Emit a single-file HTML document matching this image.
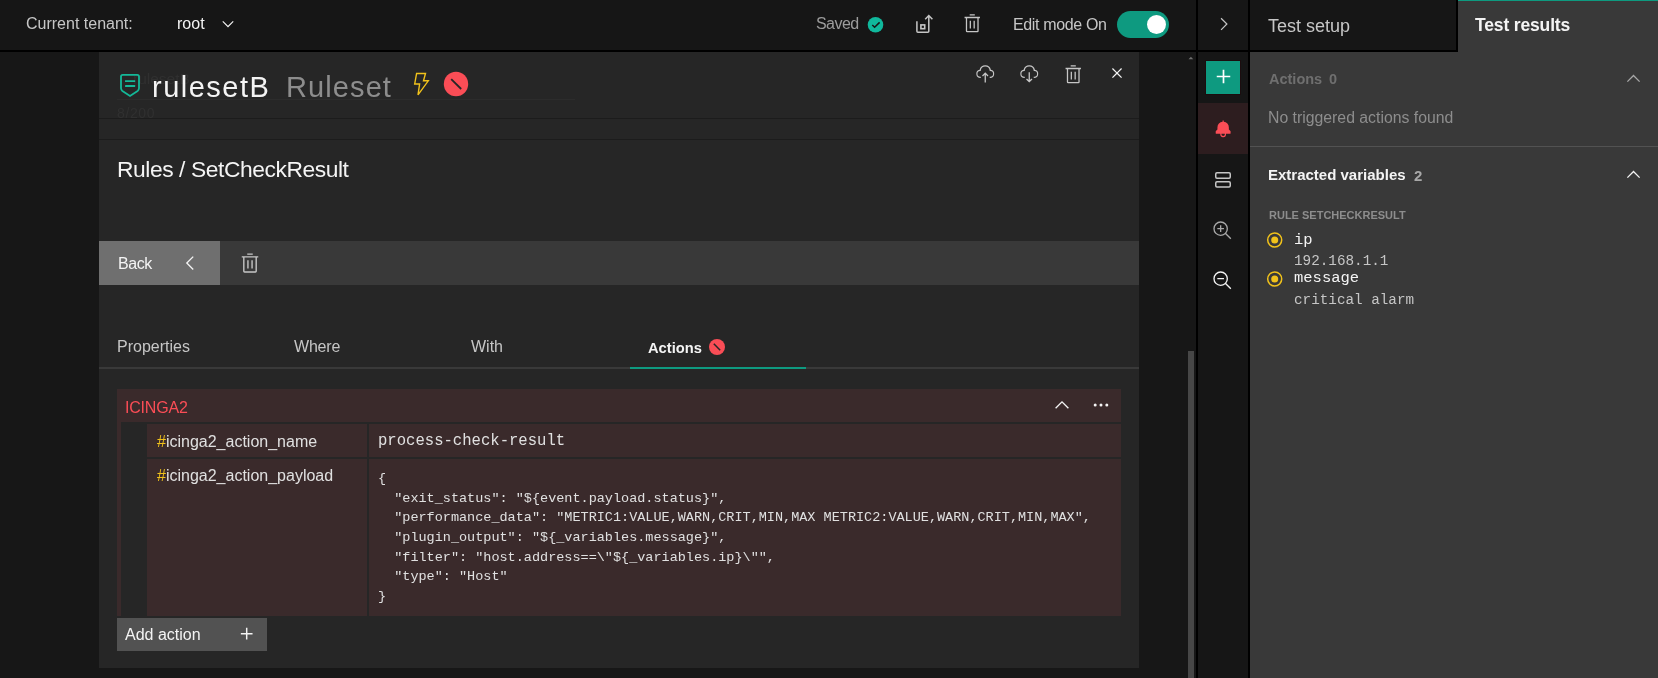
<!DOCTYPE html>
<html><head><meta charset="utf-8"><style>
*{margin:0;padding:0;box-sizing:border-box}
html,body{width:1658px;height:678px;overflow:hidden;background:#161616}
body>div,body>svg{position:absolute}
.t{white-space:pre;will-change:transform}
</style></head><body>
<div style="left:0px;top:0px;width:1658px;height:50px;background:#161616;"></div>
<div style="left:0px;top:50px;width:1456px;height:2px;background:#000;"></div>
<div class="t" style="left:26.00px;top:16.46px;font:400 16px/16px 'Liberation Sans', sans-serif;color:#c6c6c6;letter-spacing:0px;">Current tenant:</div>
<div class="t" style="left:177.30px;top:16.46px;font:400 16px/16px 'Liberation Sans', sans-serif;color:#f4f4f4;letter-spacing:0px;">root</div>
<svg style="left:218.6px;top:14.8px;" width="18" height="18" viewBox="0 0 32 32"><path fill="#f4f4f4" d="M16 22L6 12 7.4 10.6 16 19.2 24.6 10.6 26 12z"/></svg>
<div class="t" style="left:816.30px;top:15.86px;font:400 16px/16px 'Liberation Sans', sans-serif;color:#9c9c9c;letter-spacing:-0.55px;">Saved</div>
<svg style="left:866px;top:17px;" width="20" height="16" viewBox="866 17 20 16"><circle cx="875.5" cy="24.8" r="7.8" fill="#10b89c"/><path d="M872.3 25 L874.6 27.3 L879.6 22.4" fill="none" stroke="#161616" stroke-width="1.5"/></svg>
<svg style="left:912px;top:12px;" width="24" height="24" viewBox="912 12 24 24"><path d="M916.9 21.2 V31.2 Q916.9 32.2 917.9 32.2 H927.8 Q928.8 32.2 928.8 31.2 V15.6 M925.2 19.3 L928.8 15.6 L932.4 19.3" fill="none" stroke="#c6c6c6" stroke-width="1.5"/><rect x="920.9" y="24.9" width="3.8" height="3.8" fill="none" stroke="#c6c6c6" stroke-width="1.6"/></svg>
<svg style="left:961.6px;top:13.4px;" width="20.5" height="20.5" viewBox="0 0 32 32"><path fill="#c6c6c6" d="M12 12H14V24H12zM18 12H20V24H18zM4 6V8H6V28a2 2 0 002 2H24a2 2 0 002-2V8h2V6zM8 28V8H24V28zM12 2H20V4H12z"/></svg>
<div class="t" style="left:1012.50px;top:16.76px;font:400 16px/16px 'Liberation Sans', sans-serif;color:#c6c6c6;letter-spacing:-0.35px;">Edit mode On</div>
<div style="left:1117px;top:11px;width:52px;height:27px;background:#0e9a80;border-radius:14px"></div>
<div style="left:1146.5px;top:14.5px;width:19.8px;height:19.8px;background:#fff;border-radius:50%"></div>
<div style="left:1196px;top:0px;width:2px;height:678px;background:#000;"></div>
<div style="left:1248px;top:0px;width:2px;height:678px;background:#000;"></div>
<svg style="left:1213.5px;top:14.15px;" width="20" height="20" viewBox="0 0 32 32"><path fill="#c6c6c6" d="M22 16L12 26 10.6 24.6 19.2 16 10.6 7.4 12 6z"/></svg>
<div style="left:1250px;top:0px;width:1206px;height:50px;background:#161616;"></div>
<div style="left:1250px;top:50px;width:208px;height:2px;background:#000;"></div>
<div style="left:1456px;top:0px;width:2px;height:52px;background:#000;"></div>
<div class="t" style="left:1268.20px;top:16.66px;font:400 18px/18px 'Liberation Sans', sans-serif;color:#c6c6c6;letter-spacing:0px;">Test setup</div>
<div style="left:1458px;top:0px;width:200px;height:52px;background:#393939;"></div>
<div style="left:1458px;top:0px;width:200px;height:1px;background:#0e9a80;"></div>
<div class="t" style="left:1475.30px;top:17.39px;font:700 17.5px/17.5px 'Liberation Sans', sans-serif;color:#f4f4f4;letter-spacing:-0.15px;">Test results</div>
<div style="left:0px;top:52px;width:1196px;height:626px;background:#171717;"></div>
<div style="left:99px;top:52px;width:1040px;height:616px;background:#262626;"></div>
<div style="left:1188px;top:351px;width:6px;height:327px;background:#474747;"></div>
<svg style="left:1186px;top:54px;" width="10" height="8" viewBox="1186 54 10 8"><path d="M1188.5 59.3 L1190.9 56.8 L1193.3 59.3 Z" fill="#6f6f6f"/></svg>
<div class="t" style="left:133.00px;top:70.88px;font:400 15.5px/15.5px 'Liberation Sans', sans-serif;color:#303030;letter-spacing:0px;">rulesetB</div>
<div style="left:117px;top:99px;width:458px;height:1px;background:#2c2c2c;"></div>
<div class="t" style="left:116.50px;top:106.45px;font:400 14px/14px 'Liberation Sans', sans-serif;color:#303030;letter-spacing:0.6px;">8/200</div>
<svg style="left:116px;top:70px;" width="28" height="30" viewBox="116 70 28 30"><path d="M121 76.6 Q121 74.9 122.7 74.9 H137.3 Q139 74.9 139 76.6 V88.3 Q139 89.9 137.6 90.9 L130 95.9 L122.4 90.9 Q121 89.9 121 88.3 Z" fill="none" stroke="#14b898" stroke-width="1.8"/><rect x="125" y="80.2" width="10.2" height="1.9" rx="0.4" fill="#14b898"/><rect x="125" y="85.1" width="10.2" height="1.9" rx="0.4" fill="#14b898"/></svg>
<div class="t" style="left:152.40px;top:73.25px;font:400 29px/29px 'Liberation Sans', sans-serif;color:#f4f4f4;letter-spacing:1.5px;">rulesetB</div>
<div class="t" style="left:286.00px;top:73.25px;font:400 29px/29px 'Liberation Sans', sans-serif;color:#8d8d8d;letter-spacing:1.1px;">Ruleset</div>
<svg style="left:410px;top:70px;" width="24" height="30" viewBox="410 70 24 30"><path d="M416.6 73.5 H425.5 L423.5 80.8 H428.3 L418 94.8 L419.6 84 H414.7 Z" fill="none" stroke="#f1c21b" stroke-width="1.4" stroke-linejoin="miter"/></svg>
<svg style="left:440px;top:70px;" width="32" height="30" viewBox="440 70 32 30"><circle cx="456" cy="84" r="12.2" fill="#fa4d56"/><path d="M451.2 79.1 L461.2 89" stroke="#262626" stroke-width="1.8"/></svg>
<svg style="left:974.7px;top:63.7px;" width="20.5" height="20.5" viewBox="0 0 32 32"><path fill="#c6c6c6" d="M23.5,22H23V20h.5a4.5,4.5,0,0,0,.36-9L23,11l-.1-.82a7,7,0,0,0-13.88,0L9,11,8.14,11a4.5,4.5,0,0,0,.36,9H9v2H8.5A6.5,6.5,0,0,1,7.2,9.14a9,9,0,0,1,17.6,0A6.5,6.5,0,0,1,23.5,22ZM11 18L12.41 19.41 15 16.83 15 29 17 29 17 16.83 19.59 19.41 21 18 16 13 11 18z"/></svg>
<svg style="left:1018.7px;top:63.7px;" width="20.5" height="20.5" viewBox="0 0 32 32"><path fill="#c6c6c6" d="M23.5,22H23V20h.5a4.5,4.5,0,0,0,.36-9L23,11l-.1-.82a7,7,0,0,0-13.88,0L9,11,8.14,11a4.5,4.5,0,0,0,.36,9H9v2H8.5A6.5,6.5,0,0,1,7.2,9.14a9,9,0,0,1,17.6,0A6.5,6.5,0,0,1,23.5,22ZM21 24L19.59 22.59 17 25.17 17 13 15 13 15 25.17 12.41 22.59 11 24 16 29 21 24z"/></svg>
<svg style="left:1062.5px;top:63.8px;" width="20.5" height="20.5" viewBox="0 0 32 32"><path fill="#c6c6c6" d="M12 12H14V24H12zM18 12H20V24H18zM4 6V8H6V28a2 2 0 002 2H24a2 2 0 002-2V8h2V6zM8 28V8H24V28zM12 2H20V4H12z"/></svg>
<svg style="left:1106.8px;top:63px;" width="20" height="20" viewBox="0 0 32 32"><path fill="#f4f4f4" d="M24 9.4L22.6 8 16 14.6 9.4 8 8 9.4 14.6 16 8 22.6 9.4 24 16 17.4 22.6 24 24 22.6 17.4 16 24 9.4z"/></svg>
<div style="left:99px;top:118px;width:1040px;height:1px;background:#1c1c1c;"></div>
<div style="left:99px;top:139px;width:1040px;height:1px;background:#1c1c1c;"></div>
<div class="t" style="left:116.90px;top:158.30px;font:400 22.8px/22.8px 'Liberation Sans', sans-serif;color:#f4f4f4;letter-spacing:-0.42px;">Rules / SetCheckResult</div>
<div style="left:99px;top:241px;width:1040px;height:44px;background:#393939;"></div>
<div style="left:99px;top:241px;width:121px;height:44px;background:#6f6f6f;"></div>
<div class="t" style="left:117.60px;top:255.96px;font:400 16px/16px 'Liberation Sans', sans-serif;color:#f4f4f4;letter-spacing:-0.45px;">Back</div>
<svg style="left:179px;top:252.1px;" width="22" height="22" viewBox="0 0 32 32"><path fill="#f4f4f4" d="M10 16L20 6 21.4 7.4 12.8 16 21.4 24.6 20 26z"/></svg>
<svg style="left:239.15px;top:251.5px;" width="22" height="22" viewBox="0 0 32 32"><path fill="#c6c6c6" d="M12 12H14V24H12zM18 12H20V24H18zM4 6V8H6V28a2 2 0 002 2H24a2 2 0 002-2V8h2V6zM8 28V8H24V28zM12 2H20V4H12z"/></svg>
<div class="t" style="left:116.80px;top:339.16px;font:400 16px/16px 'Liberation Sans', sans-serif;color:#c6c6c6;letter-spacing:0px;">Properties</div>
<div class="t" style="left:294.00px;top:339.16px;font:400 16px/16px 'Liberation Sans', sans-serif;color:#c6c6c6;letter-spacing:-0.2px;">Where</div>
<div class="t" style="left:471.00px;top:339.16px;font:400 16px/16px 'Liberation Sans', sans-serif;color:#c6c6c6;letter-spacing:0px;">With</div>
<div class="t" style="left:648.30px;top:340.96px;font:700 14.7px/14.7px 'Liberation Sans', sans-serif;color:#f4f4f4;letter-spacing:0px;">Actions</div>
<svg style="left:706px;top:336px;" width="22" height="22" viewBox="706 336 22 22"><circle cx="717" cy="347" r="8" fill="#fa4d56"/><path d="M713.8 343.8 L720.2 350.2" stroke="#262626" stroke-width="1.5"/></svg>
<div style="left:99px;top:367px;width:1040px;height:2px;background:#393939;"></div>
<div style="left:630px;top:367px;width:176px;height:2px;background:#0e9a80;"></div>
<div style="left:117px;top:389px;width:1004px;height:227px;background:#3a2a2b;"></div>
<div class="t" style="left:125.00px;top:399.96px;font:400 16px/16px 'Liberation Sans', sans-serif;color:#fa4d56;letter-spacing:-0.2px;">ICINGA2</div>
<svg style="left:1050.7px;top:394.1px;" width="22" height="22" viewBox="0 0 32 32"><path fill="#f4f4f4" d="M16 10L26 20 24.6 21.4 16 12.8 7.4 21.4 6 20z"/></svg>
<svg style="left:1090px;top:398px;" width="22" height="14" viewBox="1090 398 22 14"><circle cx="1095.2" cy="405" r="1.5" fill="#f4f4f4"/><circle cx="1101" cy="405" r="1.5" fill="#f4f4f4"/><circle cx="1106.8" cy="405" r="1.5" fill="#f4f4f4"/></svg>
<div style="left:121px;top:422px;width:1000px;height:194px;background:#262626;"></div>
<div style="left:147px;top:424px;width:220px;height:33px;background:#3a2a2b;"></div>
<div style="left:369px;top:424px;width:752px;height:33px;background:#3a2a2b;"></div>
<div style="left:147px;top:459px;width:220px;height:157px;background:#3a2a2b;"></div>
<div style="left:369px;top:459px;width:752px;height:157px;background:#3a2a2b;"></div>
<div class="t" style="left:156.60px;top:433.66px;font:400 16px/16px 'Liberation Sans', sans-serif;color:#e0e0e0;letter-spacing:0px;"><span style="color:#f1c21b">#</span>icinga2_action_name</div>
<div class="t" style="left:156.60px;top:467.96px;font:400 16px/16px 'Liberation Sans', sans-serif;color:#e0e0e0;letter-spacing:0px;"><span style="color:#f1c21b">#</span>icinga2_action_payload</div>
<div class="t" style="left:378.30px;top:434.04px;font:400 15.6px/15.6px 'Liberation Mono', monospace;color:#e0e0e0;letter-spacing:0px;">process-check-result</div>
<div class="t" style="left:378.30px;top:472.15px;font:400 13.5px/13.5px 'Liberation Mono', monospace;color:#e0e0e0;letter-spacing:0px;">{</div>
<div class="t" style="left:378.30px;top:491.75px;font:400 13.5px/13.5px 'Liberation Mono', monospace;color:#e0e0e0;letter-spacing:0px;">  "exit_status": "${event.payload.status}",</div>
<div class="t" style="left:378.30px;top:511.35px;font:400 13.5px/13.5px 'Liberation Mono', monospace;color:#e0e0e0;letter-spacing:0px;">  "performance_data": "METRIC1:VALUE,WARN,CRIT,MIN,MAX METRIC2:VALUE,WARN,CRIT,MIN,MAX",</div>
<div class="t" style="left:378.30px;top:530.95px;font:400 13.5px/13.5px 'Liberation Mono', monospace;color:#e0e0e0;letter-spacing:0px;">  "plugin_output": "${_variables.message}",</div>
<div class="t" style="left:378.30px;top:550.55px;font:400 13.5px/13.5px 'Liberation Mono', monospace;color:#e0e0e0;letter-spacing:0px;">  "filter": "host.address==\"${_variables.ip}\"",</div>
<div class="t" style="left:378.30px;top:570.15px;font:400 13.5px/13.5px 'Liberation Mono', monospace;color:#e0e0e0;letter-spacing:0px;">  "type": "Host"</div>
<div class="t" style="left:378.30px;top:589.75px;font:400 13.5px/13.5px 'Liberation Mono', monospace;color:#e0e0e0;letter-spacing:0px;">}</div>
<div style="left:117px;top:618px;width:150px;height:33px;background:#525252;"></div>
<div class="t" style="left:124.90px;top:626.86px;font:400 16px/16px 'Liberation Sans', sans-serif;color:#f4f4f4;letter-spacing:0px;">Add action</div>
<svg style="left:235.25px;top:622.45px;" width="23.4" height="23.4" viewBox="0 0 32 32"><path fill="#f4f4f4" d="M17 15L17 8 15 8 15 15 8 15 8 17 15 17 15 24 17 24 17 17 24 17 24 15z"/></svg>
<div style="left:1198px;top:52px;width:50px;height:626px;background:#161616;"></div>
<div style="left:1206px;top:61px;width:34px;height:33px;background:#0e9a80;box-shadow:0 0 0 1px #1c0d0f"></div>
<svg style="left:1209.75px;top:63.45px;" width="27" height="27" viewBox="0 0 32 32"><path fill="#ffffff" d="M17 15L17 8 15 8 15 15 8 15 8 17 15 17 15 24 17 24 17 17 24 17 24 15z"/></svg>
<div style="left:1198px;top:103px;width:50px;height:51px;background:#2d1d1f;"></div>
<svg style="left:1213.6px;top:119.6px;" width="18.3" height="18.3" viewBox="0 0 32 32"><path fill="#fa4d56" d="M28.7071,19.293,26,16.5859V13a10.0136,10.0136,0,0,0-9-9.9492V1H15V3.0508A10.0136,10.0136,0,0,0,6,13v3.5859L3.2929,19.293A1,1,0,0,0,3,20v3a1,1,0,0,0,1,1h7v.7768a5.152,5.152,0,0,0,4.5,5.1987A5.0057,5.0057,0,0,0,21,25V24h7a1,1,0,0,0,1-1V20A1,1,0,0,0,28.7071,19.293ZM19,25a3,3,0,0,1-6,0V24h6Z"/></svg>
<svg style="left:1212px;top:170px;" width="22" height="20" viewBox="1212 170 22 20"><rect x="1215.75" y="172.75" width="14.5" height="5.4" rx="1.2" fill="none" stroke="#c6c6c6" stroke-width="1.5"/><rect x="1215.75" y="181.75" width="14.5" height="5.3" rx="1.2" fill="none" stroke="#c6c6c6" stroke-width="1.5"/></svg>
<svg style="left:1212.1px;top:220px;" width="21.3" height="21.3" viewBox="0 0 32 32"><path fill="#a8a8a8" d="M21.4479,20A10.856,10.856,0,0,0,24,13,11,11,0,1,0,13,24a10.856,10.856,0,0,0,7-2.5521L27.5859,29,29,27.5859ZM13,22a9,9,0,1,1,9-9A9.01,9.01,0,0,1,13,22ZM18 12L14 12 14 8 12 8 12 12 8 12 8 14 12 14 12 18 14 18 14 14 18 14 18 12z"/></svg>
<svg style="left:1212.1px;top:270.2px;" width="21.3" height="21.3" viewBox="0 0 32 32"><path fill="#f4f4f4" d="M21.4479,20A10.856,10.856,0,0,0,24,13,11,11,0,1,0,13,24a10.856,10.856,0,0,0,7-2.5521L27.5859,29,29,27.5859ZM13,22a9,9,0,1,1,9-9A9.01,9.01,0,0,1,13,22ZM8 12H18V14H8z"/></svg>
<div style="left:1250px;top:52px;width:408px;height:626px;background:#393939;"></div>
<div class="t" style="left:1268.50px;top:71.93px;font:700 14.5px/14.5px 'Liberation Sans', sans-serif;color:#6f6f6f;letter-spacing:0px;">Actions</div>
<div class="t" style="left:1328.70px;top:71.93px;font:700 14.5px/14.5px 'Liberation Sans', sans-serif;color:#6f6f6f;letter-spacing:0px;">0</div>
<svg style="left:1623.3px;top:67.6px;" width="21" height="21" viewBox="0 0 32 32"><path fill="#a8a8a8" d="M16 10L26 20 24.6 21.4 16 12.8 7.4 21.4 6 20z"/></svg>
<div class="t" style="left:1267.70px;top:109.53px;font:400 15.8px/15.8px 'Liberation Sans', sans-serif;color:#8d8d8d;letter-spacing:0px;">No triggered actions found</div>
<div style="left:1250px;top:146px;width:408px;height:1px;background:#525252;"></div>
<div class="t" style="left:1268.00px;top:166.90px;font:700 15px/15px 'Liberation Sans', sans-serif;color:#f4f4f4;letter-spacing:0px;">Extracted variables</div>
<div class="t" style="left:1413.60px;top:167.50px;font:700 15px/15px 'Liberation Sans', sans-serif;color:#a8a8a8;letter-spacing:0px;">2</div>
<svg style="left:1623.3px;top:164px;" width="21" height="21" viewBox="0 0 32 32"><path fill="#f4f4f4" d="M16 10L26 20 24.6 21.4 16 12.8 7.4 21.4 6 20z"/></svg>
<div class="t" style="left:1268.60px;top:209.89px;font:700 11px/11px 'Liberation Sans', sans-serif;color:#8d8d8d;letter-spacing:0px;">RULE SETCHECKRESULT</div>
<svg style="left:1264px;top:228.7px;" width="22" height="22" viewBox="1264 228.7 22 22"><circle cx="1274.7" cy="239.7" r="7" fill="none" stroke="#f1c21b" stroke-width="1.5"/><circle cx="1274.7" cy="239.7" r="3.5" fill="#f1c21b"/></svg>
<div class="t" style="left:1294.40px;top:232.52px;font:400 15.5px/15.5px 'Liberation Mono', monospace;color:#f4f4f4;letter-spacing:0px;">ip</div>
<div class="t" style="left:1294.40px;top:253.84px;font:400 14.3px/14.3px 'Liberation Mono', monospace;color:#c6c6c6;letter-spacing:0px;">192.168.1.1</div>
<svg style="left:1264px;top:267.7px;" width="22" height="22" viewBox="1264 267.7 22 22"><circle cx="1274.7" cy="278.7" r="7" fill="none" stroke="#f1c21b" stroke-width="1.5"/><circle cx="1274.7" cy="278.7" r="3.5" fill="#f1c21b"/></svg>
<div class="t" style="left:1294.40px;top:271.42px;font:400 15.5px/15.5px 'Liberation Mono', monospace;color:#f4f4f4;letter-spacing:0px;">message</div>
<div class="t" style="left:1294.40px;top:292.54px;font:400 14.3px/14.3px 'Liberation Mono', monospace;color:#c6c6c6;letter-spacing:0px;">critical alarm</div>
</body></html>
